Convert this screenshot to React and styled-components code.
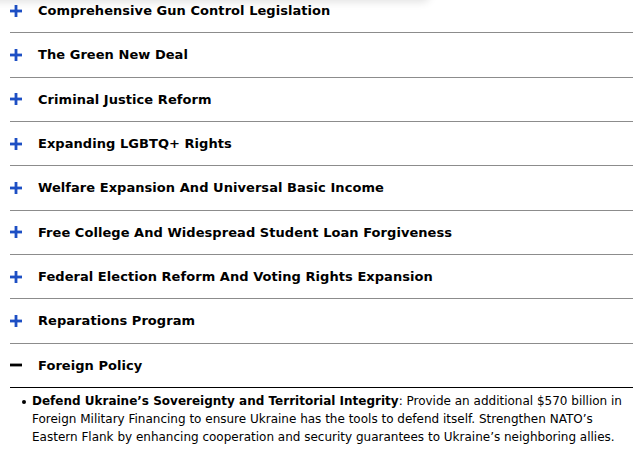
import React, { useState } from "react";
import styled, { createGlobalStyle } from "styled-components";

const GlobalStyle = createGlobalStyle`
  html, body {
    margin: 0;
    padding: 0;
    background: #ffffff;
    overflow: hidden;
  }
  body {
    font-family: "DejaVu Sans", Verdana, sans-serif;
    color: #000;
  }
`;

const topics = [
  "Comprehensive Gun Control Legislation",
  "The Green New Deal",
  "Criminal Justice Reform",
  "Expanding LGBTQ+ Rights",
  "Welfare Expansion And Universal Basic Income",
  "Free College And Widespread Student Loan Forgiveness",
  "Federal Election Reform And Voting Rights Expansion",
  "Reparations Program",
  "Foreign Policy",
];

const Page = styled.div`
  position: relative;
  width: 640px;
  height: 451px;
  overflow: hidden;
`;

const HeaderShadow = styled.div`
  position: absolute;
  left: -20px;
  top: -30px;
  width: 450px;
  height: 30px;
  background: #fff;
  box-shadow: 0 2px 8px rgba(0, 0, 0, 0.12);
  border-radius: 0 0 8px 0;
`;

const Accordion = styled.div`
  margin: -11px 7px 0 10px;
`;

const Item = styled.div``;

const Header = styled.div`
  display: flex;
  align-items: center;
  height: 43.33px;
  border-bottom: 1px solid ${(p) => (p.open ? "#000" : "#8c8c8c")};
  cursor: pointer;
`;

const Icon = styled.span`
  width: 28px;
  display: flex;
  align-items: center;
  flex-shrink: 0;
`;

const Title = styled.span`
  font-weight: bold;
  font-size: 13px;
  letter-spacing: 0.05px;
`;

const Body = styled.ul`
  margin: 0;
  padding: 4px 0 0 22px;
  font-size: 12px;
  line-height: 18px;
  list-style: none;
`;

const Point = styled.li`
  position: relative;
  &::before {
    content: "";
    position: absolute;
    left: -10px;
    top: 8px;
    width: 4px;
    height: 4px;
    border-radius: 50%;
    background: #000;
  }
`;

const Plus = () => (
  <svg width="12" height="12" viewBox="0 0 12 12">
    <rect x="0" y="4.6" width="12" height="2.8" fill="#1d4fc4" />
    <rect x="4.6" y="0" width="2.8" height="12" fill="#1d4fc4" />
  </svg>
);

const Minus = () => (
  <svg width="12" height="12" viewBox="0 0 12 12">
    <rect x="0" y="4.6" width="12" height="2.8" fill="#000" />
  </svg>
);

export default function App() {
  const [open, setOpen] = useState("Foreign Policy");
  return (
    <Page>
      <GlobalStyle />
      <HeaderShadow />
      <Accordion>
        {topics.map((t) => {
          const isOpen = open === t;
          return (
            <Item key={t}>
              <Header open={isOpen} onClick={() => setOpen(isOpen ? null : t)}>
                <Icon>{isOpen ? <Minus /> : <Plus />}</Icon>
                <Title>{t}</Title>
              </Header>
              {isOpen && (
                <Body>
                  <Point>
                    <b>Defend Ukraine’s Sovereignty and Territorial Integrity</b>: Provide an
                    additional $570 billion in Foreign Military Financing to ensure Ukraine
                    has the tools to defend itself. Strengthen NATO’s Eastern Flank by
                    enhancing cooperation and security guarantees to Ukraine’s neighboring
                    allies.
                  </Point>
                </Body>
              )}
            </Item>
          );
        })}
      </Accordion>
    </Page>
  );
}
